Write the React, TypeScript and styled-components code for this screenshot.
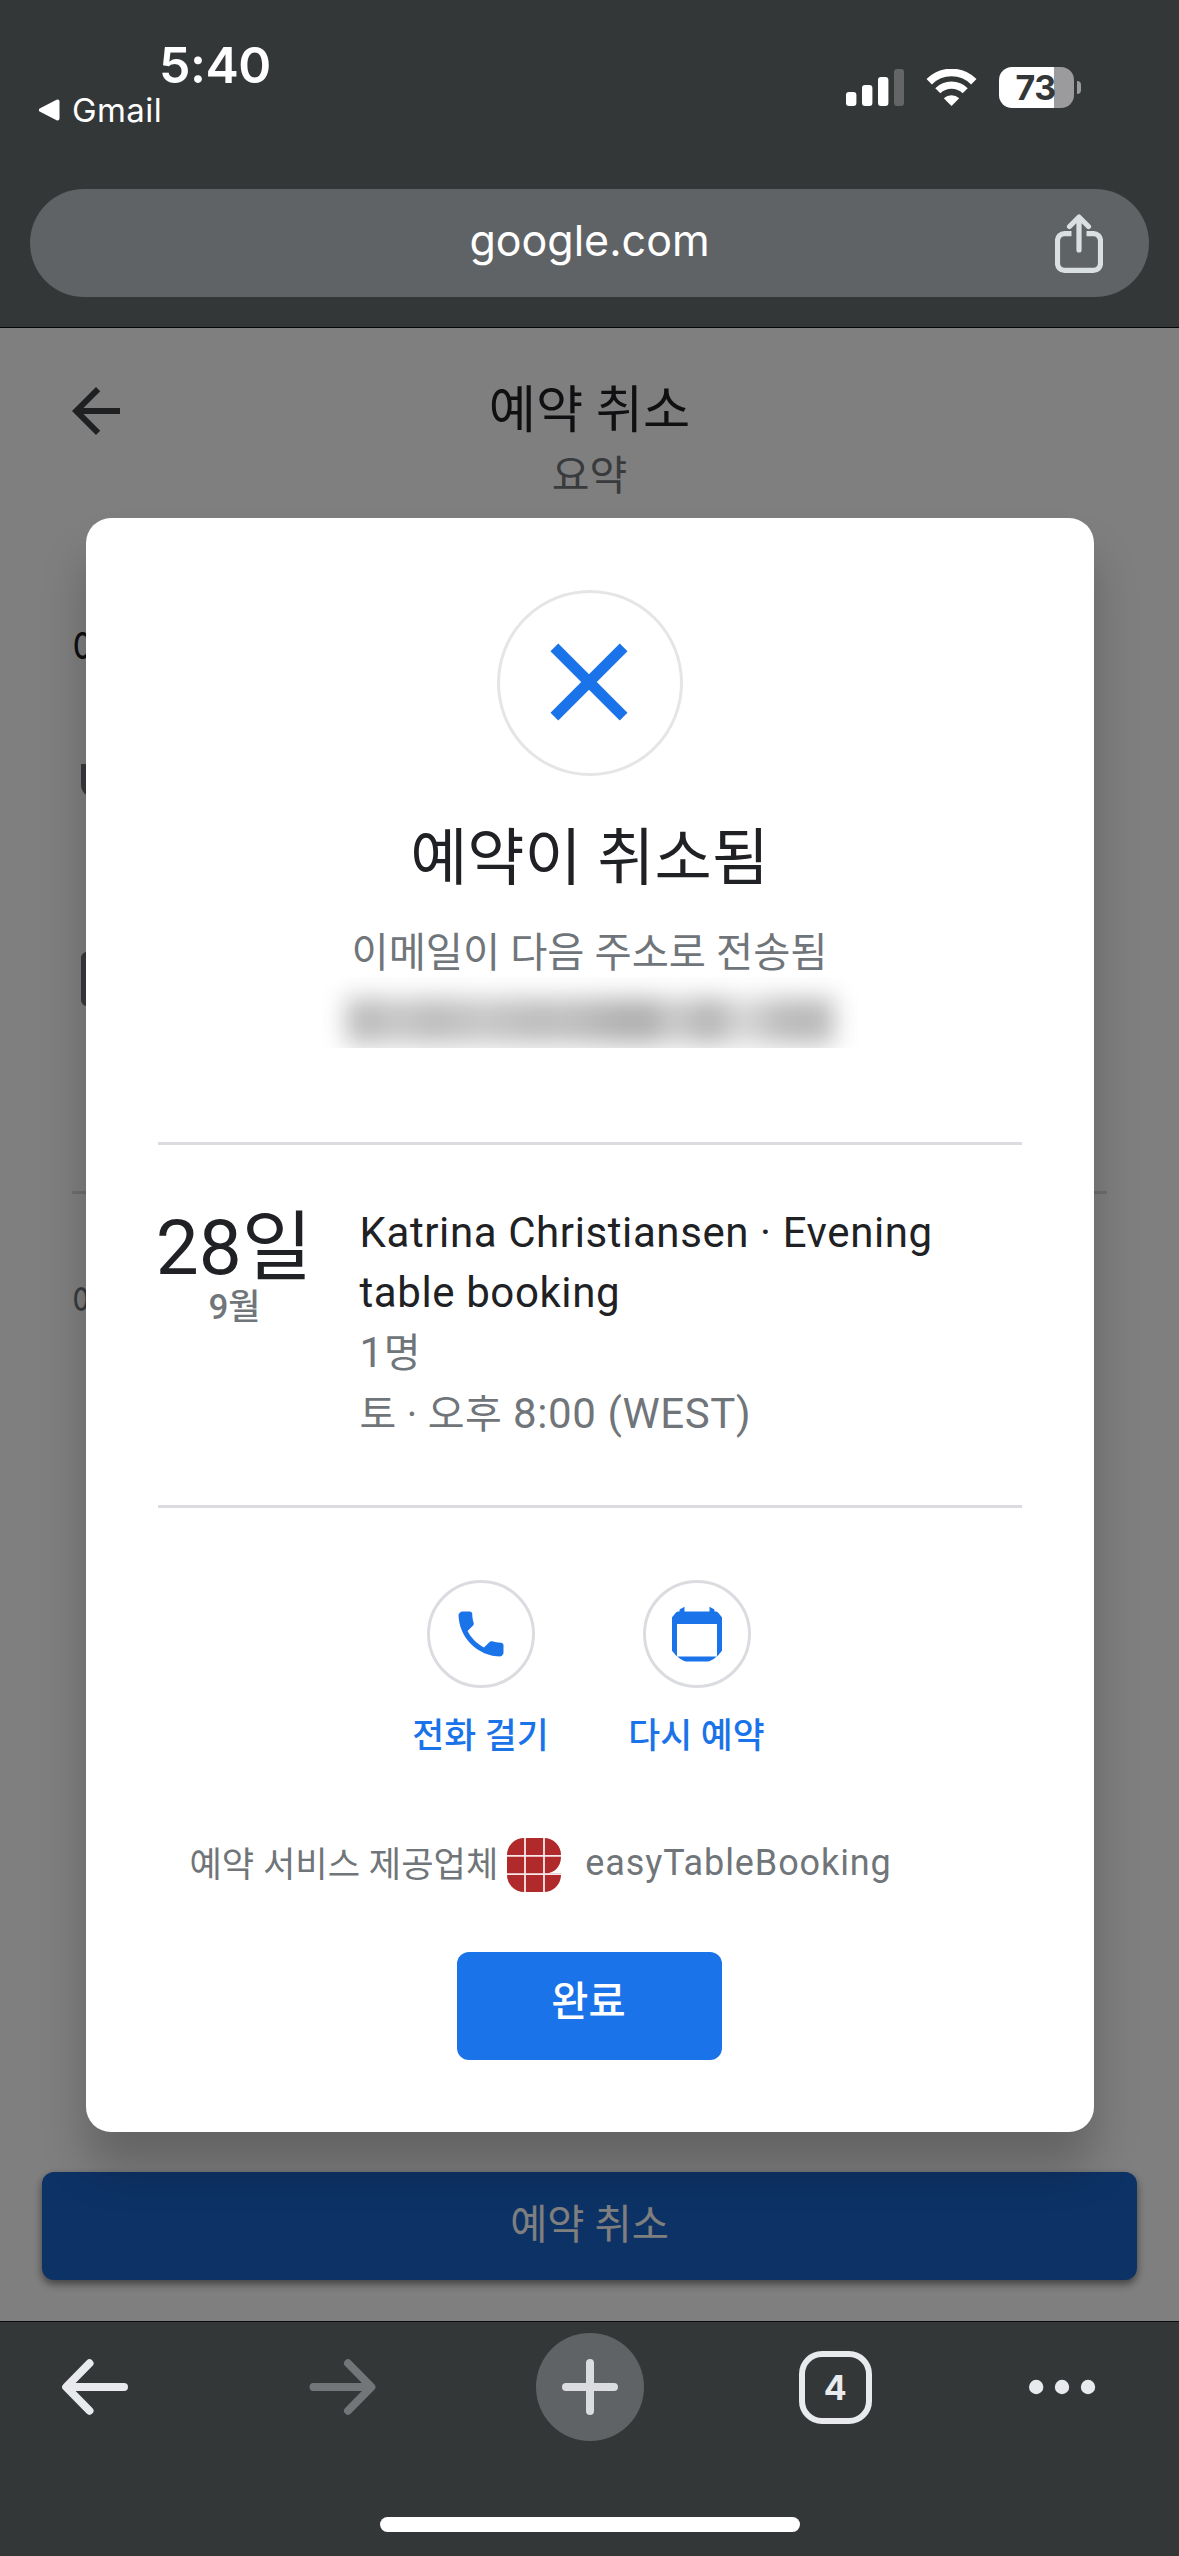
import React from 'react';
import styled, { createGlobalStyle } from 'styled-components';

const GlobalStyle = createGlobalStyle`
  * { box-sizing: border-box; }
  body { margin: 0; background: #343738; }
`;

const SYSTEM = `Inter, 'Noto Sans CJK KR', sans-serif`;
const WEB = `Roboto, 'Noto Sans CJK KR', sans-serif`;

const Screen = styled.div`
  width: 1179px;
  height: 2556px;
  display: flex;
  flex-direction: column;
  background: #343738;
  font-family: ${WEB};
  overflow: hidden;
`;

/* ---------- browser header ---------- */

const Header = styled.header`
  height: 328px;
  flex: none;
  border-bottom: 1px solid #050606;
  font-family: ${SYSTEM};
  color: #fff;
`;

const StatusBar = styled.div`
  height: 189px;
  padding: 35px 98px 0 38px;
  display: flex;
  justify-content: space-between;
  align-items: flex-start;
`;

const Clock = styled.div`
  padding-left: 121px;
  font-size: 50px;
  line-height: 60px;
  font-weight: 600;
  letter-spacing: -0.5px;
`;

const BackToApp = styled.div`
  display: flex;
  align-items: center;
  gap: 12px;
  font-size: 33px;
  line-height: 30px;
  letter-spacing: 0.4px;
`;

const Indicators = styled.div`
  margin-top: 32px;
  height: 41px;
  display: flex;
  align-items: center;
  gap: 22px;
`;

const BatteryWrap = styled.div`
  display: flex;
  align-items: center;
  gap: 3px;
`;

const Battery = styled.div`
  width: 75px;
  height: 41px;
  padding-right: 2px;
  border-radius: 13px;
  background: linear-gradient(to right, #fff 55px, #9b9b9d 55px);
  color: #343738;
  font-size: 34px;
  line-height: 42px;
  font-weight: 650;
  letter-spacing: -0.5px;
  text-align: center;
`;

const BatteryTip = styled.div`
  width: 4px;
  height: 13px;
  border-radius: 0 4px 4px 0;
  background: #9b9b9d;
`;

const AddressBar = styled.div`
  height: 108px;
  margin: 0 30px;
  padding: 0 46px;
  border-radius: 54px;
  background: #5f6365;
  display: grid;
  grid-template-columns: 48px 1fr 48px;
  align-items: center;
`;

const Address = styled.div`
  text-align: center;
  font-size: 43px;
  line-height: 103px;
  height: 108px;
`;

/* ---------- page beneath the dialog ---------- */

const Page = styled.main`
  height: 1993px;
  flex: none;
  position: relative;
  background: #fff;
  display: flex;
  flex-direction: column;
`;

const PageHeader = styled.div`
  height: 190px;
  flex: none;
  padding: 47px 60px 0;
  display: grid;
  grid-template-columns: 72px 1fr 72px;
  align-items: start;
`;

const PageTitle = styled.h1`
  margin: 2px 0 0;
  text-align: center;
  font-size: 51.3px;
  line-height: 68px;
  font-weight: 400;
  color: #202124;
`;

const PageSubtitle = styled.div`
  text-align: center;
  font-size: 41px;
  line-height: 62px;
  color: #70757a;
`;

const PageBody = styled.div`
  flex: 1;
  padding: 102px 72px 0;
`;

const SectionTitle = styled.div`
  height: 60px;
  font-size: 42px;
  line-height: 60px;
  color: #202124;
`;

const SectionIcon = styled.div<{ $gap: number }>`
  margin-top: ${(p) => p.$gap}px;
  height: 72px;
`;

const PageDivider = styled.hr`
  margin: 176px 0 0;
  border: 0;
  height: 3px;
  background: #dadce0;
`;

const PageNote = styled.div`
  margin-top: 82px;
  font-size: 36px;
  line-height: 54px;
  color: #70757a;
`;

const CancelBar = styled.button`
  height: 108px;
  margin: 0 42px 41px;
  border: 0;
  border-radius: 12px;
  background: #1b65ca;
  box-shadow: 0 4px 9px rgba(0, 0, 0, 0.5);
  color: #fff;
  font-family: ${WEB};
  font-size: 40.4px;
  font-weight: 400;
  line-height: 106px;
`;

/* ---------- dialog ---------- */

const Scrim = styled.div`
  position: absolute;
  inset: 0;
  padding-top: 190px;
  background: rgba(0, 0, 0, 0.5);
  display: flex;
  justify-content: center;
  align-items: flex-start;
`;

const Dialog = styled.section`
  width: 1008px;
  height: 1614px;
  padding: 72px;
  border-radius: 25px;
  background: #fff;
  box-shadow: 0 36px 45px rgba(0, 0, 0, 0.22);
  display: flex;
  flex-direction: column;
  align-items: center;
`;

const Ring = styled.div<{ $size: number; $color: string }>`
  width: ${(p) => p.$size}px;
  height: ${(p) => p.$size}px;
  flex: none;
  border: 3px solid ${(p) => p.$color};
  border-radius: 50%;
  display: flex;
  align-items: center;
  justify-content: center;
`;

const CloseIcon = styled.svg`
  width: 132px;
  height: 132px;
  margin: 0 1px 3px 0;
  fill: #1a73e8;
`;

const DialogTitle = styled.h2`
  margin: 47px 0 0;
  font-size: 62.2px;
  line-height: 72px;
  font-weight: 400;
  color: #202124;
`;

const DialogText = styled.div`
  margin-top: 34px;
  font-size: 40.4px;
  line-height: 50px;
  color: #70757a;
`;

const Redacted = styled.div`
  width: 536px;
  height: 71px;
  flex: none;
  margin: -2px 0 94px;
  padding: 21px 24px 0;
  overflow: hidden;
`;

const RedactedInk = styled.div`
  height: 46px;
  filter: blur(12px);
  background: linear-gradient(
    to right,
    #bcbcbc 0 6%, #cacaca 10%, #bcbcbc 18%, #c8c8c8 28%, #bdbdbd 38%,
    #c0c0c0 46%, #b6b6b6 52%, #adadad 62%, #cfcfcf 67%, #b0b0b0 75%,
    #dcdcdc 81%, #bbbbbb 89%, #b8b8b8 100%
  );
`;

const Divider = styled.hr`
  width: 100%;
  height: 3px;
  flex: none;
  margin: 0;
  border: 0;
  background: #dadce0;
`;

const Booking = styled.div`
  width: 100%;
  height: 360px;
  flex: none;
  padding-top: 58px;
  display: grid;
  grid-template-columns: 153px 1fr;
  column-gap: 49px;
`;

const DateColumn = styled.div`
  display: flex;
  flex-direction: column;
  align-items: center;
  white-space: nowrap;
`;

const Day = styled.div`
  font-size: 76.5px;
  line-height: 90px;
  color: #202124;
`;

const Month = styled.div`
  padding-left: 1px;
  font-size: 35px;
  line-height: 30px;
  font-weight: 500;
  color: #70757a;
`;

const Details = styled.div<{ $muted?: boolean }>`
  font-size: 42px;
  line-height: 60px;
  letter-spacing: 0.6px;
  color: ${(p) => (p.$muted ? '#70757a' : '#202124')};
`;

const Hangul = styled.span`
  font-size: 40px;
  letter-spacing: 0.3px;
`;

const Actions = styled.div`
  margin: 72px 2px 0 0;
  display: flex;
`;

const Action = styled.div`
  width: 216px;
  display: flex;
  flex-direction: column;
  align-items: center;
`;

const IconClip = styled.span`
  width: 60px;
  height: 60px;
  border-radius: 50%;
  overflow: hidden;
  display: flex;
`;

const ActionLabel = styled.span`
  margin-top: 24px;
  font-size: 34.7px;
  line-height: 48px;
  font-weight: 500;
  color: #1a73e8;
`;

const Provider = styled.div`
  align-self: stretch;
  height: 54px;
  margin-top: 78px;
  padding-left: 32px;
  display: flex;
  align-items: center;
  font-size: 35.2px;
  line-height: 54px;
  color: #70757a;
  white-space: nowrap;
`;

const ProviderName = styled.span`
  margin: 0 0 4px 24px;
  font-size: 36px;
  letter-spacing: 0.9px;
`;

const LogoSlot = styled.span`
  margin-left: 9px;
  display: flex;
`;

const DoneButton = styled.button`
  width: 265px;
  height: 108px;
  flex: none;
  margin-top: 60px;
  padding: 0 2px 6px 0;
  border: 0;
  border-radius: 12px;
  background: #1a73e8;
  color: #fff;
  font-family: ${WEB};
  font-size: 40.4px;
  font-weight: 500;
  line-height: 100px;
`;

/* ---------- browser toolbar ---------- */

const Toolbar = styled.footer`
  height: 235px;
  flex: none;
  border-top: 1px solid #0b0d0d;
  padding-top: 11px;
  display: flex;
  flex-direction: column;
  align-items: center;
  justify-content: space-between;
  padding-bottom: 24px;
  font-family: ${SYSTEM};
`;

const Tools = styled.div`
  width: 1179px;
  height: 108px;
  padding: 0 42px;
  display: flex;
  align-items: center;
  justify-content: space-between;
`;

const Tool = styled.div<{ $start?: boolean }>`
  width: 108px;
  height: 108px;
  display: flex;
  align-items: center;
  justify-content: ${(p) => (p.$start ? 'flex-start' : 'center')};
`;

const NewTab = styled(Tool)`
  border-radius: 50%;
  background: #5f6365;
`;

const TabCount = styled.div`
  width: 73px;
  height: 73px;
  margin-right: 2px;
  border: 6.5px solid #e8eaed;
  border-radius: 23px;
  color: #e8eaed;
  font-size: 34px;
  font-weight: 650;
  line-height: 62px;
  text-align: center;
`;

const HomeIndicator = styled.div`
  width: 420px;
  height: 15px;
  border-radius: 8px;
  background: #fff;
`;

const SignalIcon = () => (
  <svg width="58" height="37" viewBox="0 0 58 37">
    <rect x="0" y="23" width="10.4" height="14" rx="3" fill="#fff" />
    <rect x="16" y="16" width="10.4" height="21" rx="3" fill="#fff" />
    <rect x="32" y="8" width="10.4" height="29" rx="3" fill="#fff" />
    <rect x="48" y="0" width="10" height="37" rx="3" fill="#636567" />
  </svg>
);

const WifiIcon = () => (
  <svg width="51" height="37" viewBox="0 0 51 37" fill="none">
    <path d="M3.2 12.700A31.5 31.5 0 0 1 47.8 12.700" stroke="#fff" strokeWidth="7.6" />
    <path d="M11.8 21.8A19.5 19.5 0 0 1 39.2 21.8" stroke="#fff" strokeWidth="7.2" />
    <path d="M25.5 37L17.8 29.2A11.3 11.3 0 0 1 33.2 29.2Z" fill="#fff" />
  </svg>
);

const ShareIcon = () => (
  <svg width="48" height="59" viewBox="0 0 48 59" fill="none" stroke="#dadfe2" strokeWidth="5.2">
    <path d="M16.5 19.6H9.5a7 7 0 0 0-7 7v22.8a7 7 0 0 0 7 7h29a7 7 0 0 0 7-7V26.600a7 7 0 0 0-7-7h-7" />
    <path d="M24 36V3.500M14.500 12.500L24 3l9.500 9.500" strokeLinecap="round" strokeLinejoin="round" />
  </svg>
);

const ArrowIcon = ({ color, flip }: { color: string; flip?: boolean }) => (
  <svg
    width="68"
    height="56"
    viewBox="0 0 68 56"
    fill="none"
    stroke={color}
    strokeWidth="8"
    strokeLinecap="round"
    strokeLinejoin="round"
  >
    <path d={flip ? 'M4.500 28H62M39 4.300L62.400 28L39 51.700' : 'M62 28H5M27.500 4.300L4.200 28L27.500 51.700'} />
  </svg>
);

const ProviderLogo = () => (
  <svg width="54" height="54" viewBox="0 0 54 54">
    <path
      fill="#b12a2b"
      d="M17 0H37A17 17 0 0 1 54 17V19C54 29 47 35.500 38 35.500H54V37A17 17 0 0 1 37 54H17A17 17 0 0 1 0 37V17A17 17 0 0 1 17 0Z"
    />
    <path d="M18 0V54M37 0V54M0 17.800H54M0 36.200H54" stroke="#f7e9e9" strokeWidth="1.800" />
  </svg>
);

export default function App() {
  return (
    <>
      <GlobalStyle />
      <Screen>
        <Header>
          <StatusBar>
            <div>
              <Clock>5:40</Clock>
              <BackToApp>
                <svg width="22" height="22" viewBox="0 0 22 22">
                  <path d="M3 11L19.500 2.500V19.500Z" fill="#fff" stroke="#fff" strokeWidth="4" strokeLinejoin="round" />
                </svg>
                Gmail
              </BackToApp>
            </div>
            <Indicators>
              <SignalIcon />
              <WifiIcon />
              <BatteryWrap>
                <Battery>73</Battery>
                <BatteryTip />
              </BatteryWrap>
            </Indicators>
          </StatusBar>
          <AddressBar>
            <span />
            <Address>google.com</Address>
            <ShareIcon />
          </AddressBar>
        </Header>

        <Page>
          <PageHeader>
            <svg width="72" height="72" viewBox="0 0 24 24" fill="#3c4043">
              <path d="M20 11H7.830l5.590-5.590L12 4l-8 8 8 8 1.410-1.410L7.830 13H20v-2z" />
            </svg>
            <div>
              <PageTitle>예약 취소</PageTitle>
              <PageSubtitle>요약</PageSubtitle>
            </div>
          </PageHeader>
          <PageBody>
            <SectionTitle>예약</SectionTitle>
            <SectionIcon $gap={78}>
              <svg width="72" height="72" viewBox="0 0 24 24" fill="#70757a">
                <path d="M11 9H9V2H7v7H5V2H3v7c0 2.120 1.660 3.840 3.750 3.970V22h2.500v-9.030C11.340 12.840 13 11.120 13 9V2h-2v7zm5-3v8h2.500v8H21V2c-2.760 0-5 2.240-5 4z" />
              </svg>
            </SectionIcon>
            <SectionIcon $gap={113}>
              <svg width="72" height="72" viewBox="0 0 24 24" fill="#70757a">
                <path d="M19 3h-1V1h-2v2H8V1H6v2H5c-1.110 0-2 .9-2 2v14c0 1.100.89 2 2 2h14c1.100 0 2-.9 2-2V5c0-1.100-.9-2-2-2zm0 16H5V8h14v11z" />
              </svg>
            </SectionIcon>
            <PageDivider />
            <PageNote>예약</PageNote>
          </PageBody>
          <CancelBar>예약 취소</CancelBar>

          <Scrim>
            <Dialog>
              <Ring $size={186} $color="#e4e5e6">
                <CloseIcon viewBox="0 0 24 24">
                  <path d="M19 6.410L17.590 5 12 10.590 6.410 5 5 6.410 10.590 12 5 17.590 6.410 19 12 13.410 17.590 19 19 17.590 13.410 12z" />
                </CloseIcon>
              </Ring>
              <DialogTitle>예약이 취소됨</DialogTitle>
              <DialogText>이메일이 다음 주소로 전송됨</DialogText>
              <Redacted>
                <RedactedInk />
              </Redacted>
              <Divider />
              <Booking>
                <DateColumn>
                  <Day>28일</Day>
                  <Month>9월</Month>
                </DateColumn>
                <div>
                  <Details>
                    Katrina Christiansen · Evening
                    <br />
                    table booking
                  </Details>
                  <Details $muted>
                    1<Hangul>명</Hangul>
                  </Details>
                  <Details $muted>
                    <Hangul>토 · 오후</Hangul> 8:00 (WEST)
                  </Details>
                </div>
              </Booking>
              <Divider />
              <Actions>
                <Action>
                  <Ring $size={108} $color="#dadce0">
                    <IconClip>
                      <svg width="60" height="60" viewBox="0 0 24 24" fill="#1a73e8">
                        <path d="M6.620 10.790c1.440 2.830 3.760 5.140 6.590 6.590l2.200-2.200c.27-.27.67-.36 1.020-.24 1.120.37 2.330.57 3.570.57.55 0 1 .45 1 1V20c0 .55-.45 1-1 1-9.390 0-17-7.610-17-17 0-.55.45-1 1-1h3.500c.55 0 1 .45 1 1 0 1.250.2 2.450.57 3.570.11.35.03.74-.25 1.020l-2.200 2.200z" />
                      </svg>
                    </IconClip>
                  </Ring>
                  <ActionLabel>전화 걸기</ActionLabel>
                </Action>
                <Action>
                  <Ring $size={108} $color="#dadce0">
                    <IconClip>
                      <svg width="60" height="60" viewBox="0 0 24 24" fill="#1a73e8">
                        <path d="M20 3h-1V1h-2v2H7V1H5v2H4c-1.100 0-2 .9-2 2v16c0 1.100.9 2 2 2h16c1.100 0 2-.9 2-2V5c0-1.100-.9-2-2-2zm0 18H4V8h16v13z" />
                      </svg>
                    </IconClip>
                  </Ring>
                  <ActionLabel>다시 예약</ActionLabel>
                </Action>
              </Actions>
              <Provider>
                예약 서비스 제공업체
                <LogoSlot>
                  <ProviderLogo />
                </LogoSlot>
                <ProviderName>easyTableBooking</ProviderName>
              </Provider>
              <DoneButton>완료</DoneButton>
            </Dialog>
          </Scrim>
        </Page>

        <Toolbar>
          <Tools>
            <Tool>
              <ArrowIcon color="#e8eaed" />
            </Tool>
            <Tool>
              <ArrowIcon color="#737678" flip />
            </Tool>
            <NewTab>
              <svg width="56" height="56" viewBox="0 0 56 56" stroke="#dadce0" strokeWidth="8" strokeLinecap="round">
                <path d="M28 4V52M4 28H52" />
              </svg>
            </NewTab>
            <Tool>
              <TabCount>4</TabCount>
            </Tool>
            <Tool $start>
              <svg width="68" height="16" viewBox="0 0 68 16" fill="#e8eaed">
                <circle cx="7.200" cy="8" r="7.200" />
                <circle cx="33" cy="8" r="7.200" />
                <circle cx="59" cy="8" r="7.200" />
              </svg>
            </Tool>
          </Tools>
          <HomeIndicator />
        </Toolbar>
      </Screen>
    </>
  );
}
